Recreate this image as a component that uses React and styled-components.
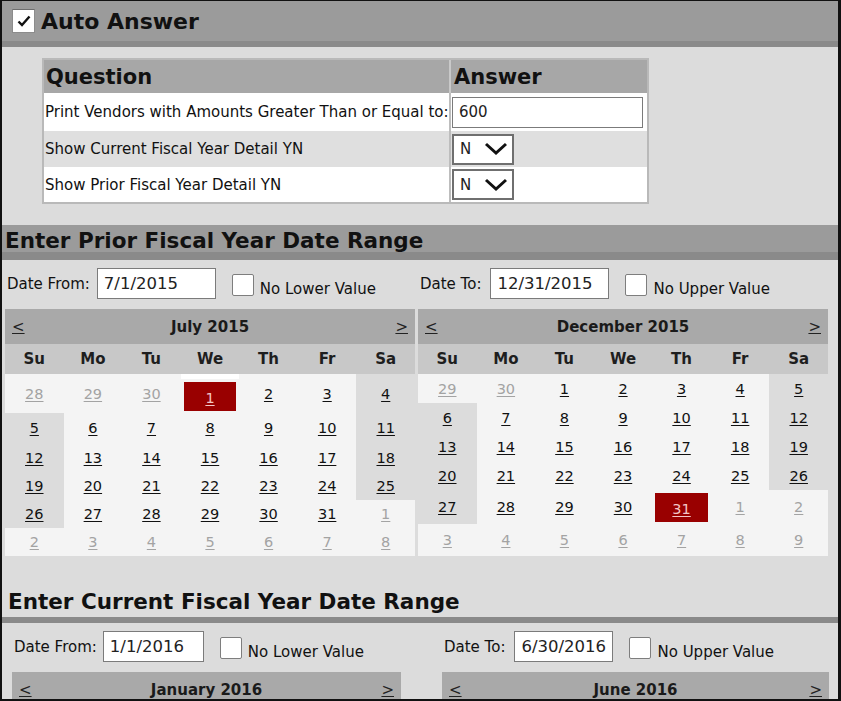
import styled, { createGlobalStyle } from "styled-components"

const GlobalStyle = createGlobalStyle`
  body {
    margin: 0;
    background: #dcdcdc;
    font-family: "DejaVu Sans", Verdana, sans-serif;
    color: #111;
  }
`

const questions = [
  { text: "Print Vendors with Amounts Greater Than or Equal to:", type: "text", value: "600", height: 38, bg: "#ffffff" },
  { text: "Show Current Fiscal Year Detail YN", type: "select", value: "N", height: 36, bg: "#dfdfdf" },
  { text: "Show Prior Fiscal Year Detail YN", type: "select", value: "N", height: 35, bg: "#ffffff" },
]

const monthNames = ["January", "February", "March", "April", "May", "June", "July", "August", "September", "October", "November", "December"]
const dayNames = ["Su", "Mo", "Tu", "We", "Th", "Fr", "Sa"]

function buildMonth(year, month) {
  const first = new Date(year, month, 1)
  const weeks = []
  for (let w = 0; w < 6; w++) {
    const week = []
    for (let d = 0; d < 7; d++) {
      const date = new Date(year, month, 1 - first.getDay() + w * 7 + d)
      week.push({
        day: date.getDate(),
        inMonth: date.getMonth() === month,
        weekend: d === 0 || d === 6,
      })
    }
    weeks.push(week)
  }
  return weeks
}

function Check() {
  return (
    <svg width="16" height="14" viewBox="0 0 16 14">
      <path d="M2.5 7.5 L6 11 L13.5 2.5" fill="none" stroke="#111" strokeWidth="2.4" />
    </svg>
  )
}

function Chevron() {
  return (
    <svg width="24" height="14" viewBox="0 0 24 14">
      <path d="M2 2 L12 11 L22 2" fill="none" stroke="#111" strokeWidth="3" />
    </svg>
  )
}

function Calendar({ year, month, selected, rows, tab }) {
  const weeks = buildMonth(year, month)
  return (
    <CalBox>
      <CalTitle>
        <NavLink>&lt;</NavLink>
        <span>{monthNames[month]} {year}</span>
        <NavLink>&gt;</NavLink>
      </CalTitle>
      <DayNames>
        {dayNames.map(n => <DayName key={n}>{n}</DayName>)}
      </DayNames>
      <Days $rows={rows.map(r => r + "px").join(" ")}>
        {weeks.map(week =>
          week.map((c, i) => {
            if (c.inMonth && c.day === selected) {
              return (
                <SelectedCell key={i + "-" + c.day} $tab={tab}>
                  <SelectedBox><DayLink $selected>{c.day}</DayLink></SelectedBox>
                </SelectedCell>
              )
            }
            return (
              <DayCell key={i + "-" + c.day + "-" + c.inMonth} $weekend={c.inMonth && c.weekend}>
                <DayLink $other={!c.inMonth}>{c.day}</DayLink>
              </DayCell>
            )
          })
        )}
      </Days>
    </CalBox>
  )
}

function DateField({ label, value, width, labelGap, checkLabel }) {
  return (
    <DateRow>
      <FieldLabel $gap={labelGap}>{label}</FieldLabel>
      <DateInput $w={width} value={value} readOnly />
      <CheckGroup>
        <CheckBox />
        <CheckText>{checkLabel}</CheckText>
      </CheckGroup>
    </DateRow>
  )
}

function App() {
  return (
    <>
      <GlobalStyle />
      <Frame>
        <AutoHeader>
          <HeaderCheck><Check /></HeaderCheck>
          <HeaderTitle>Auto Answer</HeaderTitle>
        </AutoHeader>

        <QTable>
          <HeadCell $divider>Question</HeadCell>
          <HeadCell>Answer</HeadCell>
          {questions.map(q => (
            <QRow key={q.text}>
              <QCell $h={q.height} $bg={q.bg}>{q.text}</QCell>
              <ACell $h={q.height} $bg={q.bg}>
                {q.type === "text" ? (
                  <AnswerInput value={q.value} readOnly />
                ) : (
                  <FakeSelect>
                    <span>{q.value}</span>
                    <Chevron />
                  </FakeSelect>
                )}
              </ACell>
            </QRow>
          ))}
        </QTable>

        <BarHeading>Enter Prior Fiscal Year Date Range</BarHeading>
        <RangeBody $top={8} $pad={3} $gap={3} $cols="410px 410px">
          <Column>
            <DateField label="Date From:" value="7/1/2015" width={119} labelGap={7} checkLabel="No Lower Value" />
            <Calendar year={2015} month={6} selected={1} rows={[39, 30, 29, 28, 28, 28]} tab />
          </Column>
          <Column>
            <DateField label="Date To:" value="12/31/2015" width={119} labelGap={9} checkLabel="No Upper Value" />
            <Calendar year={2015} month={11} selected={31} rows={[29, 29, 29, 29, 34, 32]} />
          </Column>
        </RangeBody>

        <LineHeading>Enter Current Fiscal Year Date Range</LineHeading>
        <RangeBody $top={0} $pad={10} $gap={41} $cols="389px 387px">
          <Column>
            <DateField label="Date From:" value="1/1/2016" width={101} labelGap={6} checkLabel="No Lower Value" />
            <Calendar year={2016} month={0} selected={1} rows={[30, 30, 30, 30, 30, 30]} />
          </Column>
          <Column>
            <DateField label="Date To:" value="6/30/2016" width={99} labelGap={9} checkLabel="No Upper Value" />
            <Calendar year={2016} month={5} selected={30} rows={[30, 30, 30, 30, 30, 30]} />
          </Column>
        </RangeBody>
      </Frame>
    </>
  )
}

export default App

const Frame = styled.div`
  width: 841px;
  height: 701px;
  box-sizing: border-box;
  border: 2px solid #111;
  border-top-width: 1px;
  border-right-width: 3px;
  background: #dcdcdc;
  overflow: hidden;
  display: flex;
  flex-direction: column;
`

const AutoHeader = styled.div`
  height: 40px;
  flex-shrink: 0;
  background: #9b9b9b;
  border-bottom: 6px solid #8a8a8a;
  display: flex;
  align-items: center;
  padding-left: 10px;
  gap: 6px;
`

const HeaderCheck = styled.div`
  width: 21px;
  height: 22px;
  background: #fff;
  border: 1px solid #8c8c8c;
  border-top-color: #6e6e6e;
  display: flex;
  align-items: center;
  justify-content: center;
`

const HeaderTitle = styled.div`
  font-size: 22px;
  font-weight: bold;
  color: #111;
`

const QTable = styled.div`
  margin: 11px 0 0 40px;
  width: 607px;
  box-sizing: border-box;
  border: 2px solid #b9b9b9;
  display: grid;
  grid-template-columns: 407px 1fr;
  flex-shrink: 0;
`

const QRow = styled.div`
  display: contents;
`

const HeadCell = styled.div`
  height: 33px;
  line-height: 34px;
  background: #a7a7a7;
  font-size: 21px;
  font-weight: bold;
  padding-left: ${p => (p.$divider ? "2px" : "3px")};
  border-right: ${p => (p.$divider ? "2px solid #c9c9c9" : "none")};
`

const QCell = styled.div`
  height: ${p => p.$h}px;
  background: ${p => p.$bg};
  font-size: 15px;
  padding-left: 1px;
  display: flex;
  align-items: center;
  border-right: 2px solid #bdbdbd;
  white-space: nowrap;
`

const ACell = styled.div`
  height: ${p => p.$h}px;
  background: ${p => p.$bg};
  display: flex;
  align-items: center;
  padding-left: 1px;
`

const AnswerInput = styled.input`
  width: 191px;
  height: 31px;
  box-sizing: border-box;
  border: 1px solid #7b7b7b;
  background: #fff;
  padding: 0 6px;
  font-family: "DejaVu Sans", Verdana, sans-serif;
  font-size: 15px;
  color: #222;
  outline: none;
`

const FakeSelect = styled.div`
  width: 62px;
  height: 31px;
  box-sizing: border-box;
  border: 2px solid #6f6f6f;
  background: #fff;
  display: flex;
  align-items: center;
  justify-content: space-between;
  padding: 0 4px 0 6px;
  font-size: 15px;
  color: #222;
`

const BarHeading = styled.div`
  margin-top: 21px;
  height: 27px;
  box-sizing: border-box;
  padding: 4px 0 0 3px;
  line-height: 24px;
  background: #9b9b9b;
  box-shadow: 0 8px 0 #8a8a8a;
  font-size: 21.5px;
  font-weight: bold;
  white-space: nowrap;
  flex-shrink: 0;
`

const LineHeading = styled.div`
  margin-top: 31px;
  height: 36px;
  box-sizing: border-box;
  padding-left: 6px;
  line-height: 30px;
  border-bottom: 6px solid #8a8a8a;
  font-size: 21.5px;
  font-weight: bold;
  white-space: nowrap;
  flex-shrink: 0;
`

const RangeBody = styled.div`
  margin-top: ${p => p.$top}px;
  display: grid;
  grid-template-columns: ${p => p.$cols};
  column-gap: ${p => p.$gap}px;
  padding-left: ${p => p.$pad}px;
  flex-shrink: 0;
`

const Column = styled.div`
  display: flex;
  flex-direction: column;
`

const DateRow = styled.div`
  display: flex;
  align-items: center;
  height: 31px;
  margin-top: 8px;
  padding-left: 2px;
  margin-bottom: 10px;
`

const FieldLabel = styled.span`
  font-size: 15px;
  margin-right: ${p => p.$gap}px;
  white-space: nowrap;
`

const DateInput = styled.input`
  width: ${p => p.$w}px;
  height: 31px;
  box-sizing: border-box;
  border: 1px solid #7b7b7b;
  background: #fff;
  padding: 0 6px;
  font-family: "DejaVu Sans", Verdana, sans-serif;
  font-size: 16.5px;
  color: #222;
  outline: none;
`

const CheckGroup = styled.div`
  display: flex;
  align-items: flex-end;
  gap: 6px;
  margin-left: 16px;
  align-self: flex-end;
  margin-bottom: 3px;
`

const CheckBox = styled.div`
  width: 22px;
  height: 22px;
  box-sizing: border-box;
  background: #fff;
  border: 1px solid #7e7e7e;
  border-radius: 2px;
`

const CheckText = styled.span`
  font-size: 15px;
  white-space: nowrap;
  line-height: 14px;
`

const CalBox = styled.div`
  display: flex;
  flex-direction: column;
`

const CalTitle = styled.div`
  height: 35px;
  background: #a9a9a9;
  display: flex;
  align-items: center;
  justify-content: space-between;
  padding: 0 7px;
  font-size: 15px;
  font-weight: bold;
  color: #1a1a1a;
`

const NavLink = styled.span`
  font-weight: normal;
  text-decoration: underline;
  color: #222;
`

const DayNames = styled.div`
  height: 30px;
  background: #c8c8c8;
  display: grid;
  grid-template-columns: repeat(7, 1fr);
  align-items: center;
`

const DayName = styled.span`
  text-align: center;
  font-size: 15px;
  font-weight: bold;
  color: #1e1e1e;
`

const Days = styled.div`
  display: grid;
  grid-template-columns: repeat(7, 1fr);
  grid-template-rows: ${p => p.$rows};
  background: #f4f4f4;
`

const DayCell = styled.div`
  display: flex;
  align-items: center;
  justify-content: center;
  background: ${p => (p.$weekend ? "#dcdcdc" : "transparent")};
`

const SelectedCell = styled.div`
  display: flex;
  box-sizing: border-box;
  border-top: ${p => (p.$tab ? "5px solid #ffffff" : "0")};
  padding: 3px 3px 2px;
`

const SelectedBox = styled.div`
  flex: 1;
  background: #990000;
  display: flex;
  align-items: center;
  justify-content: center;
  padding-top: 2px;
`

const DayLink = styled.span`
  font-size: 14.5px;
  text-decoration: underline;
  text-underline-offset: 2px;
  color: ${p => (p.$selected ? "#f3c6c6" : p.$other ? "#a3a3a3" : "#111")};
`
